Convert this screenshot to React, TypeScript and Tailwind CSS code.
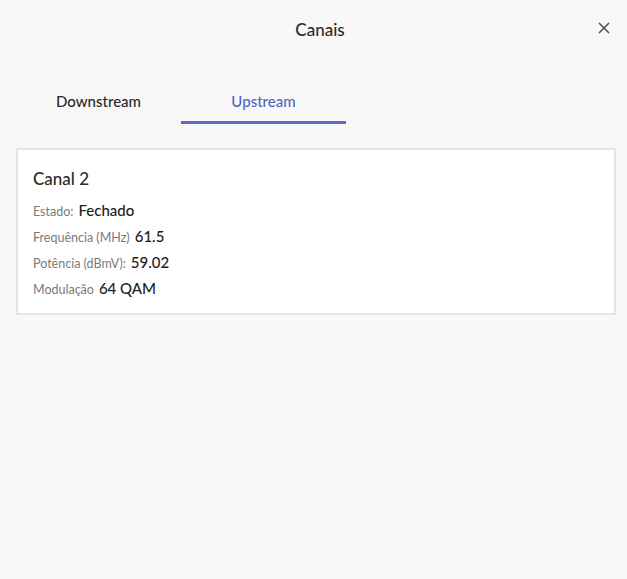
import { X } from 'lucide-react';

const rows = [
  { label: 'Estado:', value: 'Fechado' },
  { label: 'Frequência (MHz)', value: '61.5' },
  { label: 'Potência (dBmV):', value: '59.02' },
  { label: 'Modulação', value: '64 QAM' },
];

export default function App() {
  return (
    <div className="min-h-[579px] w-full bg-[#f8f8f8] font-['Lato','Noto_Sans',sans-serif] text-[#222]">
      <div className="relative flex h-[60px] items-center justify-center pl-[13px]">
        <h1 className="text-[17px] font-medium text-[#2a2a2a]">Canais</h1>
        <button className="absolute right-[14px] top-[19px] text-[#555]" aria-label="Fechar">
          <X className="h-[18px] w-[18px]" strokeWidth={2.2} />
        </button>
      </div>

      <div className="mt-[22px] flex px-4">
        <div className="flex h-[42px] w-[165px] items-center justify-center pb-[3px] text-[15px] font-medium text-[#2a2a2a]">
          Downstream
        </div>
        <div className="flex h-[42px] w-[165px] items-center justify-center border-b-[3px] border-[#5c6bc8] text-[15px] font-medium text-[#5563c1]">
          Upstream
        </div>
      </div>

      <div className="ml-4 mr-[11px] mt-[24px] border-2 border-[#e6e6e6] bg-white px-[15px] pb-[16px] pt-[19px]">
        <h2 className="text-[17px] font-medium leading-5 text-[#2a2a2a]">Canal 2</h2>
        <div className="mt-[10px] flex flex-col gap-[6px]">
          {rows.map(r => (
            <div key={r.label} className="flex h-5 items-baseline gap-[5px]">
              <span className="text-[12.5px] text-[#7a7a7a]">{r.label}</span>
              <span className="text-[15px] font-medium text-[#222]">{r.value}</span>
            </div>
          ))}
        </div>
      </div>
    </div>
  );
}
